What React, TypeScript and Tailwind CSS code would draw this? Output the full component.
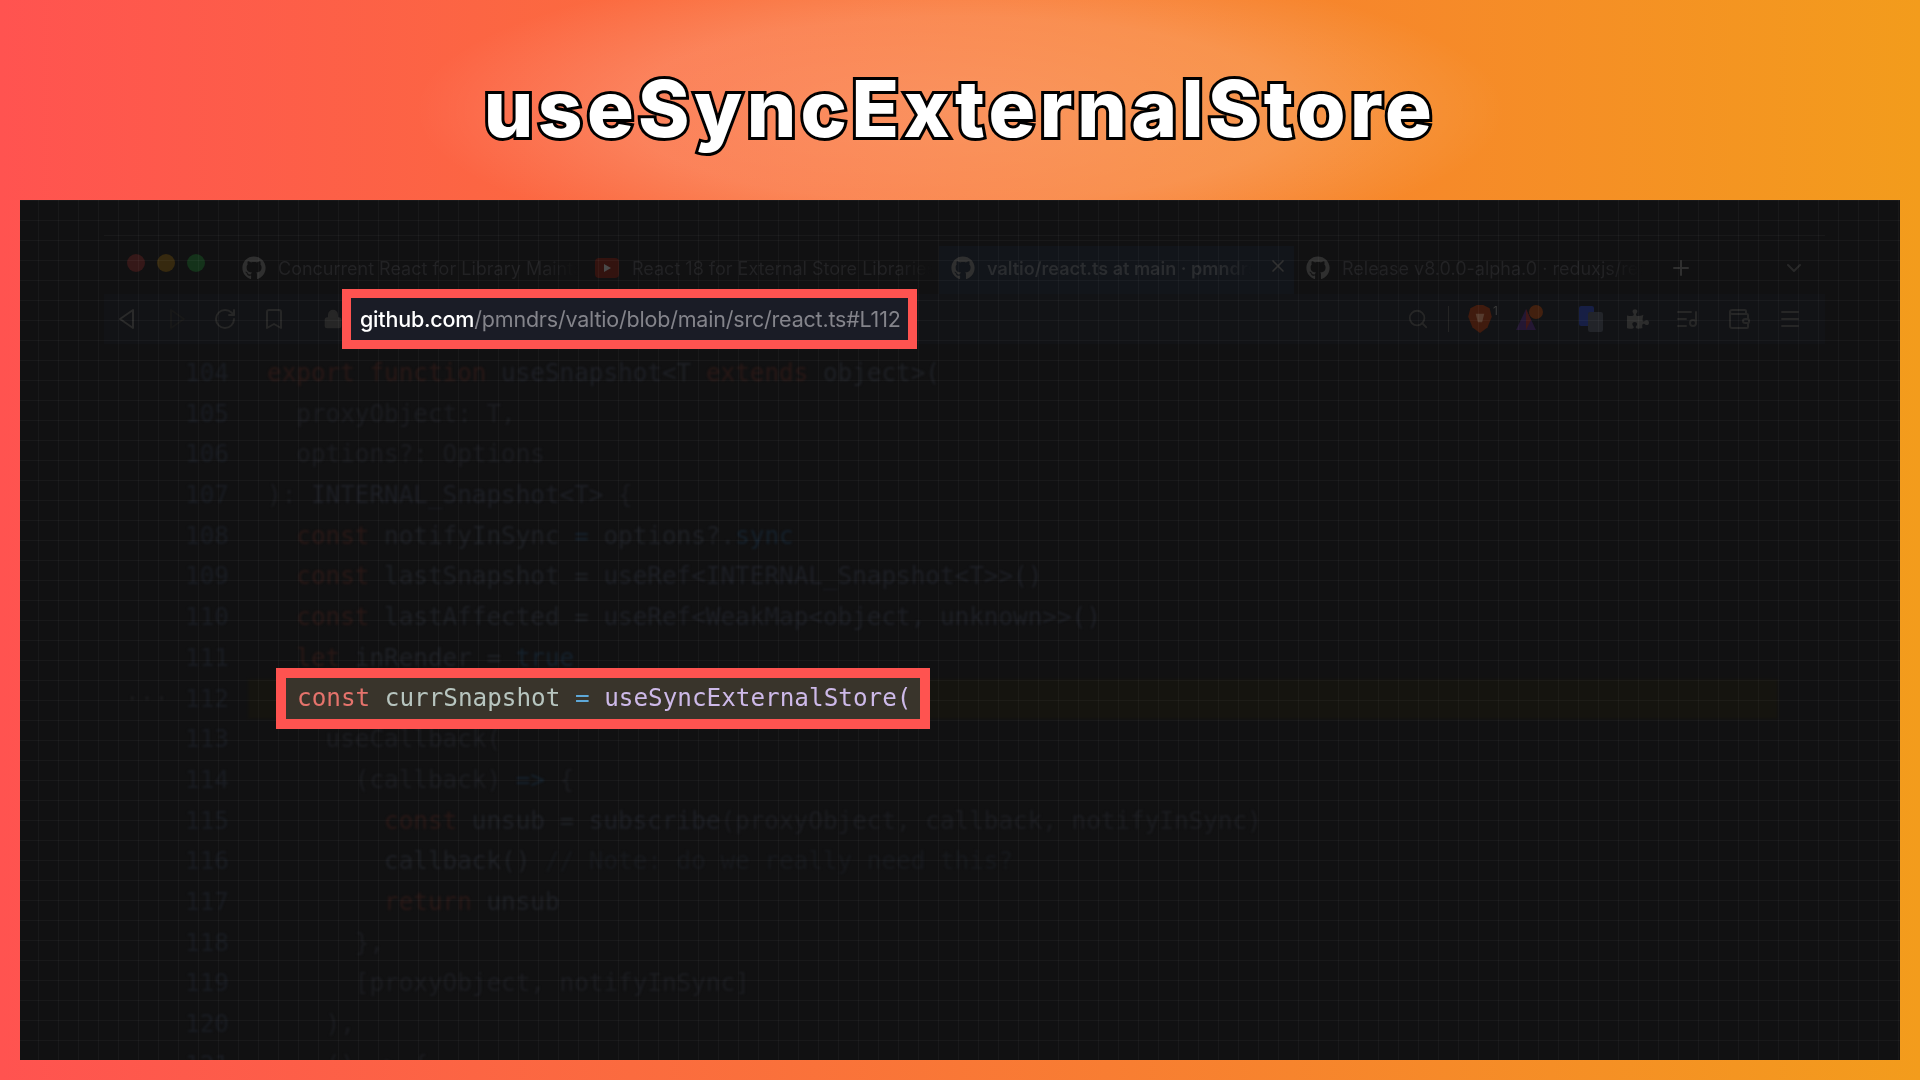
import { Bookmark, ChevronDown, ListMusic, Lock, Menu, Plus, RotateCw, Search, Wallet, X } from "lucide-react";
import { FaGithub, FaPuzzlePiece } from "react-icons/fa";

type Seg = [string, string];

const KW = "text-[#291816]";
const NAME = "text-[#1e2025]";
const FN = "text-[#1d1f25]";
const OP = "text-[#15212c]";
const DIM = "text-[#1b1c20]";

// Dimmed code behind the highlight, line numbers 104-121
const LINES: { n: number; indent: number; segs: Seg[] }[] = [
  { n: 104, indent: 0, segs: [["export function", KW], [" ", NAME], ["useSnapshot", FN], ["<T ", NAME], ["extends", KW], [" object>(", NAME]] },
  { n: 105, indent: 2, segs: [["proxyObject: T,", DIM]] },
  { n: 106, indent: 2, segs: [["options?: Options", DIM]] },
  { n: 107, indent: 0, segs: [["): ", DIM], ["INTERNAL_Snapshot<T>", FN], [" {", DIM]] },
  { n: 108, indent: 2, segs: [["const", KW], [" notifyInSync ", NAME], ["=", OP], [" options?.", NAME], ["sync", OP]] },
  { n: 109, indent: 2, segs: [["const", KW], [" lastSnapshot = ", NAME], ["useRef<INTERNAL_Snapshot<T>>()", FN]] },
  { n: 110, indent: 2, segs: [["const", KW], [" lastAffected = ", NAME], ["useRef<WeakMap<object, unknown>>()", FN]] },
  { n: 111, indent: 2, segs: [["let", KW], [" inRender = ", NAME], ["true", OP]] },
  { n: 112, indent: 2, segs: [] },
  { n: 113, indent: 4, segs: [["useCallback(", DIM]] },
  { n: 114, indent: 6, segs: [["(callback) ", DIM], ["=>", OP], [" {", DIM]] },
  { n: 115, indent: 8, segs: [["const", KW], [" unsub = ", NAME], ["subscribe", FN], ["(proxyObject, callback, notifyInSync)", DIM]] },
  { n: 116, indent: 8, segs: [["callback()", NAME], [" // Note: do we really need this?", "text-[#17191d]"]] },
  { n: 117, indent: 8, segs: [["return", KW], [" unsub", NAME]] },
  { n: 118, indent: 6, segs: [["},", DIM]] },
  { n: 119, indent: 6, segs: [["[proxyObject, notifyInSync]", DIM]] },
  { n: 120, indent: 4, segs: [["),", DIM]] },
  { n: 121, indent: 4, segs: [["() => {", DIM]] },
];

const TABS = [
  { title: "Concurrent React for Library Maintainers", width: "w-[353px]", active: false, yt: false },
  { title: "React 18 for External Store Libraries", width: "w-[356px]", active: false, yt: true },
  { title: "valtio/react.ts at main · pmndrs", width: "w-[355px]", active: true, yt: false },
  { title: "Release v8.0.0-alpha.0 · reduxjs/redux", width: "w-[354px]", active: false, yt: false },
];

function Tab({ title, width, active, yt }: (typeof TABS)[number]) {
  return (
    <div className={`relative flex h-full shrink-0 items-center pb-[4px] pl-[12px] ${width} ${active ? "bg-[#12151a] font-semibold text-[#2a2c2f]" : "text-[#222224]"}`}>
      {yt ? (
        <div className="mr-[13px] flex h-[20px] w-[24px] shrink-0 items-center justify-center rounded-[4px] bg-[#33130f]">
          <div className="h-0 w-0 border-y-[4px] border-l-[7px] border-y-transparent border-l-[#4a4a4a]" />
        </div>
      ) : (
        <FaGithub className="mr-[12px] h-[24px] w-[24px] shrink-0 text-[#2f2f2f]" />
      )}
      <span className={`overflow-hidden text-[18px] whitespace-nowrap [mask-image:linear-gradient(90deg,#000_88%,transparent)] ${active ? "w-[265px]" : "w-[300px]"}`}>{title}</span>
      {active && <X className="absolute top-[10px] right-[6px] h-[20px] w-[20px] text-[#303030]" />}
    </div>
  );
}

function BrowserToolbar() {
  return (
    <div className="flex h-[50px] items-center bg-[#121316] pl-[11px] text-[#262626] blur-[0.7px]">
      <svg viewBox="0 0 24 24" className="h-[24px] w-[24px] text-[#2a2a2a]" fill="none" stroke="currentColor" strokeWidth="2" strokeLinejoin="round">
        <path d="M18 3 5 12l13 9z" />
      </svg>
      <svg viewBox="0 0 24 24" className="ml-[26px] h-[24px] w-[24px] text-[#181818]" fill="none" stroke="currentColor" strokeWidth="2" strokeLinejoin="round">
        <path d="M6 3l13 9-13 9z" />
      </svg>
      <RotateCw className="ml-[24px] h-[24px] w-[24px]" />
      <Bookmark className="ml-[25px] h-[24px] w-[24px]" />
      <Lock className="ml-[37px] h-[20px] w-[20px] fill-[#262626]" />
      <div className="ml-auto flex items-center pr-[23px]">
        <Search className="h-[22px] w-[22px]" />
        <div className="ml-[19px] h-[26px] w-px bg-[#242424]" />
        <svg viewBox="0 0 24 28" className="ml-[18px] h-[30px] w-[26px]">
          <path d="M3 4l6-3h6l6 3 2 8-4 10-7 5-7-5-4-10z" fill="#401b0e" />
          <path d="M8 9h8l-2 8h-4z" fill="#553b2e" />
        </svg>
        <span className="-mt-[16px] text-[12px] text-[#3a3a3a]">1</span>
        <svg viewBox="0 0 30 30" className="ml-[16px] h-[30px] w-[30px]">
          <path d="M12 5 22 26H2z" fill="#241733" />
          <path d="M12 5 17 16 12 26z" fill="#401717" />
          <circle cx="22" cy="8" r="7" fill="#42200f" />
        </svg>
        <svg viewBox="0 0 26 30" className="ml-[34px] h-[30px] w-[26px]">
          <rect x="1" y="2" width="15" height="20" rx="2" fill="#171f45" />
          <rect x="10" y="8" width="15" height="20" rx="2" fill="#222429" />
        </svg>
        <FaPuzzlePiece className="ml-[23px] h-[22px] w-[22px] text-[#2c2c2c]" />
        <ListMusic className="ml-[26px] h-[24px] w-[24px]" />
        <Wallet className="ml-[28px] h-[24px] w-[24px]" />
        <Menu className="ml-[27px] h-[24px] w-[24px]" />
      </div>
    </div>
  );
}

export default function App() {
  return (
    <div className="flex h-[1080px] w-[1920px] flex-col overflow-hidden bg-[linear-gradient(90deg,#ff5350_0%,#f39c1c_100%)]">
      <header className="flex h-[200px] shrink-0 items-center justify-center bg-[radial-gradient(ellipse_545px_150px_at_50%_55%,rgba(255,255,255,0.2)_0%,rgba(255,255,255,0.15)_62%,rgba(255,255,255,0)_100%)] pt-[18px]">
        <h1
          className="font-['Inter',sans-serif] text-[78px] leading-none font-extrabold tracking-[4.4px] text-white"
          style={{ WebkitTextStroke: "6px #000", paintOrder: "stroke fill" }}
        >
          useSyncExternalStore
        </h1>
      </header>

      <main className="relative mx-[20px] h-[860px] shrink-0 overflow-hidden bg-[#111112] pt-[35px] pr-[75px] pl-[84px]">
        <div className="border-t border-[#19191a] font-['Inter',sans-serif]">
          <div className="flex h-[58px] items-end blur-[0.7px]">
            <div className="flex h-[52px] items-center pb-[10px] pl-[23px]">
              <div className="h-[18px] w-[18px] rounded-full bg-[#351818]" />
              <div className="ml-[12px] h-[18px] w-[18px] rounded-full bg-[#36290f]" />
              <div className="ml-[12px] h-[18px] w-[18px] rounded-full bg-[#14321a]" />
            </div>
            <div className="ml-[25px] flex h-[48px] items-center">
              {TABS.map((t) => (
                <Tab key={t.title} {...t} />
              ))}
              <Plus className="mb-[4px] ml-[21px] h-[24px] w-[24px] text-[#2f2f2f]" />
              <ChevronDown className="mb-[4px] ml-[89px] h-[24px] w-[24px] text-[#282828]" />
            </div>
          </div>
          <BrowserToolbar />
        </div>

        <div className="mt-[9px] -ml-[84px] font-['DejaVu_Sans_Mono',monospace] text-[24.3px] leading-[40.7px] blur-[0.8px]">
          {LINES.map((line) => (
            <div key={line.n} className={`flex h-[40.7px] whitespace-pre ${line.n === 112 ? "bg-[linear-gradient(90deg,transparent_228px,#15140f_228px,#15140f_1758px,transparent_1758px)]" : ""}`}>
              <span className="w-[165px] shrink-0 pl-[105px] text-[#1b1b1d]">{line.n === 112 ? "···" : ""}</span>
              <span className="w-[82px] shrink-0 text-[#191c22]">{line.n}</span>
              <span>
                {" ".repeat(line.indent)}
                {line.segs.map(([text, cls], i) => (
                  <span key={i} className={cls}>
                    {text}
                  </span>
                ))}
              </span>
            </div>
          ))}
        </div>

        {/* grid lines sit over everything in the panel */}
        <div className="pointer-events-none absolute inset-0 bg-[linear-gradient(#ffffff09_1px,transparent_1px),linear-gradient(90deg,#ffffff09_1px,transparent_1px)] bg-[size:20px_20px] bg-[position:-2px_0]" />

        {/* highlighted url */}
        <div className="absolute top-[89px] left-[322px] flex h-[60px] w-[575px] items-center border-[9px] border-[#ff5350] bg-[#1a1c26] pl-[9px] font-['Inter',sans-serif] text-[21.5px] tracking-[-0.2px] whitespace-nowrap">
          <span className="font-medium text-white blur-[0.3px]">github.com</span>
          <span className="text-[#84848b] blur-[0.3px]">/pmndrs/valtio/blob/main/src/react.ts#L112</span>
        </div>

        {/* highlighted line */}
        <div className="absolute top-[468px] left-[256px] flex h-[61px] w-[654px] items-center border-[10px] border-[#ff5350] bg-[#39342b] pl-[11px] font-['DejaVu_Sans_Mono',monospace] text-[24.3px] whitespace-pre">
          <span className="text-[#e5736c] blur-[0.3px]">const</span>
          <span className="text-[#b7c5bf] blur-[0.3px]"> currSnapshot </span>
          <span className="text-[#5ea8d8] blur-[0.3px]">=</span>
          <span className="text-[#cdb9e8] blur-[0.3px]"> useSyncExternalStore(</span>
        </div>
      </main>
    </div>
  );
}
